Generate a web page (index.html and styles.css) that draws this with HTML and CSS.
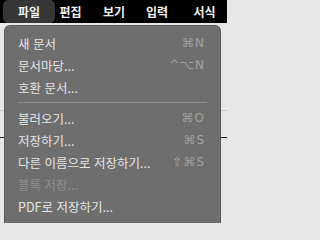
FILE: index.html
```html
<!DOCTYPE html>
<html lang="ko">
<head>
<meta charset="utf-8">
<link rel="stylesheet" href="styles.css">
</head>
<body>
<div class="menubar">
  <span class="mb-item active">파일</span>
  <span class="mb-item edit">편집</span>
  <span class="mb-item view">보기</span>
  <span class="mb-item input">입력</span>
  <span class="mb-item format">서식</span>
</div>
<div class="desk">
  <div class="menu">
    <div class="row"><span class="label">새 문서</span><span class="key">⌘N</span></div>
    <div class="row"><span class="label">문서마당...</span><span class="key">^⌥N</span></div>
    <div class="row"><span class="label">호환 문서...</span></div>
    <div class="sep"></div>
    <div class="row"><span class="label">불러오기...</span><span class="key">⌘O</span></div>
    <div class="row"><span class="label">저장하기...</span><span class="key">⌘S</span></div>
    <div class="row"><span class="label">다른 이름으로 저장하기...</span><span class="key">⇧⌘S</span></div>
    <div class="row disabled"><span class="label">블록 저장...</span></div>
    <div class="row"><span class="label">PDF로 저장하기...</span></div>
  </div>
</div>
</body>
</html>
```
FILE: styles.css
```css
html, body {
  margin: 0;
  padding: 0;
  background: #e7e7e7;
  font-family: "Noto Sans CJK KR", "Noto Sans", sans-serif;
}

body {
  width: 227px;
  height: 223px;
  overflow: hidden;
}

.menubar {
  height: 23px;
  background: #000;
  display: flex;
  align-items: center;
  padding-left: 3px;
  overflow: hidden;
}

.mb-item {
  flex: none;
  color: #f2f2f2;
  font-weight: 700;
  font-size: 12px;
  line-height: 23px;
  text-align: center;
}

.mb-item.active {
  width: 52px;
  background: #363636;
  border-radius: 5px;
}

.mb-item.edit { width: 31px; }
.mb-item.view { width: 56px; }
.mb-item.input { width: 30px; }
.mb-item.format { width: 65px; }

.desk {
  padding: 2px 6px 0 4px;
  height: 200px;
  overflow: hidden;
  background:
    linear-gradient(#c9c9c9, #c9c9c9) 0 87px / 100% 1px no-repeat,
    linear-gradient(#1a1a1a, #1a1a1a) 0 114px / 100% 1px no-repeat,
    #e7e7e7;
}

.menu {
  width: 217px;
  height: 220px;
  box-sizing: border-box;
  background: #6e6e6e;
  border: 1px solid #5a5a5a;
  border-bottom: none;
  border-radius: 6px 6px 0 0;
  padding-top: 6px;
}

.row {
  height: 22px;
  display: flex;
  align-items: center;
  justify-content: space-between;
  padding: 0 15px 0 13px;
  font-size: 12.5px;
  color: #e6e6e6;
}

.row.disabled {
  color: #8e8e8e;
}

.key {
  font-family: "DejaVu Sans", "Liberation Sans", sans-serif;
  font-size: 12px;
  color: #a2a2a2;
  letter-spacing: 1px;
}

.sep {
  height: 9px;
  display: flex;
  align-items: center;
  padding: 0 13px;
}

.sep::before {
  content: "";
  flex: 1;
  height: 1px;
  background: #8a8a8a;
}
```
